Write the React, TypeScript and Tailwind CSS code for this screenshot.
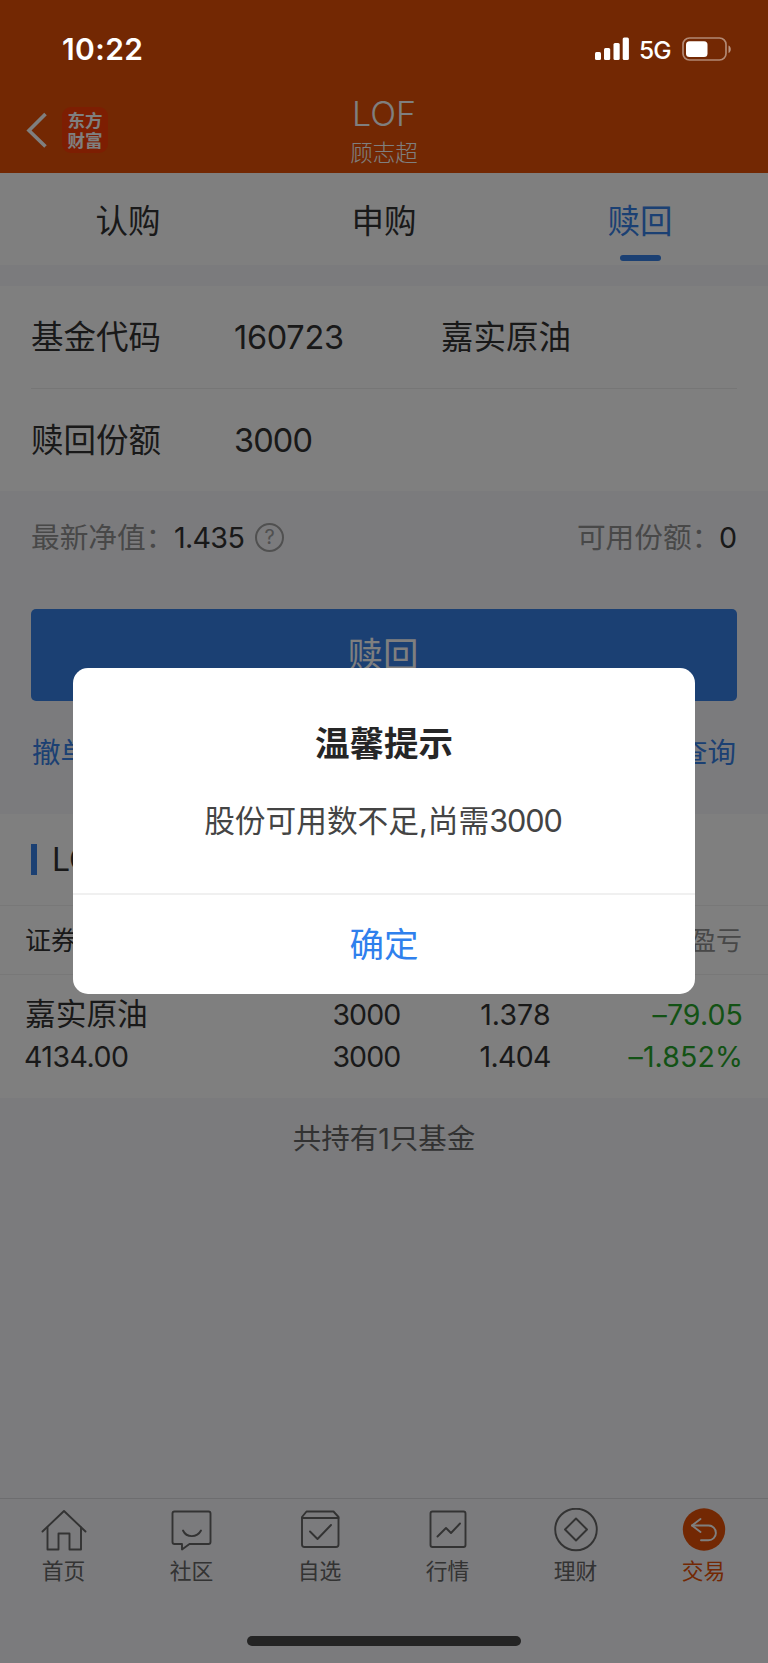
import type { ReactNode } from "react";

const TABS = ["认购", "申购", "赎回"];

const NAV: { label: string; active?: boolean; icon: ReactNode }[] = [
  {
    label: "首页",
    icon: (
      <>
        <path d="M2.500 23.500 24 3l21.500 20.500" />
        <path d="M7.500 19.500v22h11V25.500h11v16h11.500v-22" />
      </>
    ),
  },
  {
    label: "社区",
    icon: (
      <>
        <path d="M6.500 3.500h34a2 2 0 0 1 2 2v28.500a2 2 0 0 1-2 2H21.500l-7.500 5.500V36H6.500a2 2 0 0 1-2-2V5.500a2 2 0 0 1 2-2Z" />
        <path d="M15 22.500c3.500 7.500 14 7.500 18 0" />
      </>
    ),
  },
  {
    label: "自选",
    icon: (
      <>
        <path d="M10.500 3.500h27L42.500 9v27.500a2.500 2.500 0 0 1-2.500 2.500H8.500A2.500 2.500 0 0 1 6 36.500V9Z" />
        <path d="M6 10h36.500M14 23.500l7.500 7.500L35 17" />
      </>
    ),
  },
  {
    label: "行情",
    icon: (
      <>
        <rect x="6.500" y="3.500" width="35" height="35.500" rx="2" />
        <path d="m13.500 28.500 8.500-8.500 5 5 9-9.500" />
      </>
    ),
  },
  {
    label: "理财",
    icon: (
      <>
        <circle cx="24" cy="21.500" r="20.800" />
        <path d="M24 10.500 35 21.500 24 32.500 13 21.500Z" />
      </>
    ),
  },
  {
    label: "交易",
    active: true,
    icon: (
      <>
        <circle cx="24" cy="21.500" r="21.200" fill="#e65006" stroke="none" />
        <g stroke="#fff">
          <path d="M20.500 11 12 17.500l8.500 6.500" />
          <path d="M12 17.500h16.500a7.400 7.400 0 0 1 0 14.800h-7.500" />
        </g>
      </>
    ),
  },
];

function StatusBar() {
  return (
    <div className="absolute inset-x-0 top-0 z-20 flex h-[98px] items-center justify-between pr-[36px] pl-[62px] text-white">
      <span className="text-[30px] font-semibold tracking-[0.4px]">10:22</span>
      <div className="flex items-center">
        <svg width="34" height="24" viewBox="0 0 34 24" fill="currentColor">
          <rect x="0" y="15" width="6" height="8" rx="1.500" />
          <rect x="9" y="11" width="6.200" height="12" rx="1.500" />
          <rect x="18.500" y="6" width="6.200" height="17" rx="1.500" />
          <rect x="27.700" y="0.500" width="6.200" height="22.500" rx="1.500" />
        </svg>
        <span className="ml-[10px] w-[33px] pt-[3px] text-[24.500px] font-medium tracking-[-0.800px]">5G</span>
        <svg className="ml-[10px]" width="50" height="24" viewBox="0 0 50 24">
          <rect x="1" y="1" width="43" height="22" rx="6.500" fill="none" stroke="#fff" strokeOpacity=".45" strokeWidth="1.700" />
          <rect x="4" y="4.200" width="21.500" height="15.800" rx="3.500" fill="#fff" />
          <path d="M46.500 8.500v7.500c3-1 3-6.500 0-7.500Z" fill="#fff" fillOpacity=".5" />
        </svg>
      </div>
    </div>
  );
}

function Header() {
  return (
    <header className="flex h-[173px] shrink-0 items-start bg-[#e65006] pt-[98px] text-white">
      <div className="flex w-[256px] items-center pt-[9px] pl-[26px]">
        <svg width="22" height="36" viewBox="0 0 22 36" fill="none" stroke="currentColor" strokeWidth="3.600">
          <path d="M19.500 2 3 18.500l16.500 16" />
        </svg>
        <div className="ml-[14px] flex h-[46px] w-[46px] flex-col items-center justify-center rounded-[9px] bg-[#fa3c05] pt-px text-[17.500px] leading-[19.500px] font-bold">
          <span>东方</span>
          <span>财富</span>
        </div>
      </div>
      <div className="flex w-[256px] flex-col items-center">
        <h1 className="h-[36px] text-[34px] leading-[31px] font-light">LOF</h1>
        <p className="text-[22.500px] leading-[38px] font-light">顾志超</p>
      </div>
    </header>
  );
}

function Dialog() {
  return (
    <div className="absolute inset-0 z-10 flex items-center justify-center bg-black/50 pb-px">
      <div className="flex h-[326px] w-[622px] flex-col rounded-[15px] bg-white text-center">
        <div className="h-[225px] pt-[51px]">
          <h2 className="text-[34.500px] leading-[50px] font-bold text-[#262626]">温馨提示</h2>
          <p className="mt-[27px] pr-[2px] text-[30.700px] leading-[50px] text-[#444]">
            股份可用数不足,尚需<span className="tracking-[-1.100px]">3000</span>
          </p>
        </div>
        <button className="flex-1 border-t-2 border-[#f0f0f0] pt-px text-[34.500px] text-[#2f80ed]">确定</button>
      </div>
    </div>
  );
}

export default function App() {
  return (
    <div className="relative flex h-[1663px] w-[768px] flex-col overflow-hidden bg-[#f6f6fa] font-[Inter,'Noto_Sans_CJK_SC',sans-serif] text-[#333]">
      <StatusBar />
      <Header />

      <nav className="flex h-[92px] shrink-0 bg-white">
        {TABS.map((tab) => (
          <div
            key={tab}
            className={tab === "赎回" ? "flex flex-1 flex-col items-center text-[#3680e6]" : "flex flex-1 flex-col items-center"}
          >
            <span className="h-[82px] text-[32.500px] leading-[97px]">{tab}</span>
            {tab === "赎回" && <span className="h-[6px] w-[41px] rounded-full bg-[#3680e6]" />}
          </div>
        ))}
      </nav>

      <section className="mt-[21px] h-[205px] shrink-0 bg-white px-[31px] text-[32.500px]">
        <div className="flex h-[103px] items-center border-b border-[#ececec] pt-[3px]">
          <span className="w-[203px]">基金代码</span>
          <span className="w-[207px] tracking-[-0.300px]">160723</span>
          <span>嘉实原油</span>
        </div>
        <div className="flex h-[102px] items-center pt-[2px]">
          <span className="w-[203px]">赎回份额</span>
          <span className="tracking-[-0.900px]">3000</span>
        </div>
      </section>

      <div className="flex h-[93px] shrink-0 items-center justify-between px-[31px] text-[28.700px]">
        <div className="flex items-center">
          <span className="w-[142px] whitespace-nowrap text-[#909090]">最新净值：</span>
          <span className="pl-px tracking-[-0.700px]">1.435</span>
          <span className="ml-[11px] flex h-[29px] w-[29px] items-center justify-center rounded-full border-2 border-[#a0a0a0] text-[20px] text-[#a0a0a0]">?</span>
        </div>
        <div className="flex items-center">
          <span className="w-[142px] whitespace-nowrap text-[#909090]">可用份额：</span>
          <span>0</span>
        </div>
      </div>

      <button className="mx-[31px] mt-[25px] h-[92px] shrink-0 rounded-[5px] bg-[#3680e6] pt-px pr-[2px] text-[35.500px] text-white">赎回</button>

      <div className="flex h-[113px] shrink-0 justify-between px-[32px] pt-[27px] text-[28.500px] leading-[50px] text-[#3680e6]">
        <span>撤单</span>
        <span>查询</span>
      </div>

      <section className="h-[284px] shrink-0 bg-white">
        <div className="flex h-[91px] items-center">
          <span className="ml-[31px] h-[31px] w-[6px] bg-[#3680e6]" />
          <h2 className="ml-[15px] text-[32px] tracking-[-0.300px]">LOF</h2>
        </div>
        <div className="flex h-[70px] items-center justify-between border-y border-[#f0f0f0] px-[25px] text-[26px]">
          <span>证券</span>
          <span className="pr-px text-[#909090]">盈亏</span>
        </div>
        <div className="flex justify-between px-[25px] pt-[19px] text-[28.500px] leading-[42px]">
          <div className="flex w-[250px] flex-col">
            <span className="-mt-px mb-px text-[30.700px]">嘉实原油</span>
            <span className="-ml-px tracking-[-0.500px]">4134.00</span>
          </div>
          <div className="flex w-[125px] flex-col items-end tracking-[-0.900px]">
            <span>3000</span>
            <span>3000</span>
          </div>
          <div className="flex w-[150px] flex-col items-end tracking-[-0.700px]">
            <span className="tracking-[0.100px]">1.378</span>
            <span>1.404</span>
          </div>
          <div className="flex w-[192px] flex-col items-end tracking-[0.100px] text-[#27a52a]">
            <span>–79.05</span>
            <span>–1.852%</span>
          </div>
        </div>
      </section>

      <p className="mt-[15px] text-center text-[28.500px] leading-[51px] text-[#646464]">共持有1只基金</p>

      <footer className="mt-auto flex h-[165px] shrink-0 border-t border-[#dadade] pt-[9px]">
        {NAV.map((item) => (
          <div
            key={item.label}
            className={item.active ? "flex flex-1 flex-col items-center text-[#e65006]" : "flex flex-1 flex-col items-center text-[#666]"}
          >
            <svg width="48" height="44" viewBox="0 0 48 44" fill="none" stroke="currentColor" strokeWidth="1.900" strokeLinejoin="round" strokeLinecap="round">
              {item.icon}
            </svg>
            <span className="mt-[3px] pr-px text-[21.800px] leading-[32px]">{item.label}</span>
          </div>
        ))}
      </footer>

      <Dialog />
      <div className="absolute bottom-[17px] left-[247px] z-20 h-[10px] w-[274px] rounded-full bg-[#242424]" />
    </div>
  );
}
